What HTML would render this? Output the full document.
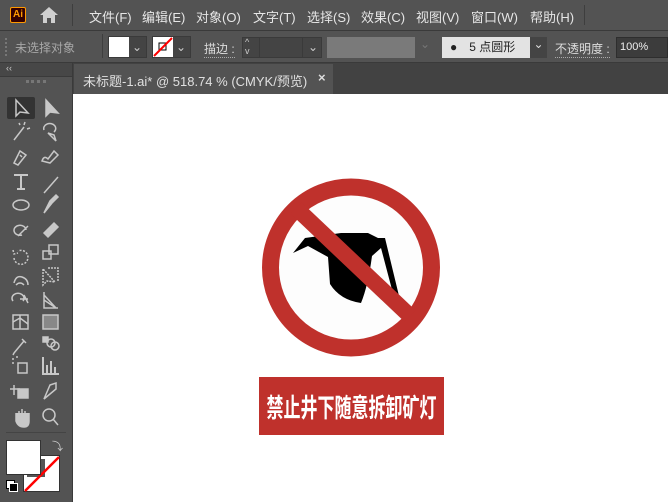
<!DOCTYPE html>
<html><head><meta charset="utf-8"><style>
*{margin:0;padding:0;box-sizing:border-box}
html,body{width:668px;height:502px;overflow:hidden}
body{background:#535353;font-family:"Liberation Sans","Noto Sans CJK SC",sans-serif;color:#ddd;position:relative}
.a{position:absolute}
.menu span{position:absolute;top:7px;font-size:13px;color:#e6e6e6}
.ctl{font-size:12px}
</style></head><body>
<div class="a" style="left:0;top:0;width:668px;height:30px;background:#535353"></div>
<div class="a" style="left:10px;top:7px;width:16px;height:16px;background:#330000;border:1px solid #ff9a00;border-radius:2px;color:#ff9a00;font-size:10px;font-weight:bold;text-align:center;line-height:14px">Ai</div>
<svg class="a" style="left:39px;top:6px" width="20" height="18"><path d="M10 1 L19 9 L16 9 L16 17 L12 17 L12 12 L8 12 L8 17 L4 17 L4 9 L1 9 Z" fill="#cfcfcf"/></svg>
<div class="a" style="left:72px;top:4px;width:1px;height:22px;background:#3e3e3e"></div>
<div class="menu">
<span style="left:89px">文件(F)</span><span style="left:142px">编辑(E)</span><span style="left:196px">对象(O)</span><span style="left:253px">文字(T)</span><span style="left:307px">选择(S)</span><span style="left:361px">效果(C)</span><span style="left:416px">视图(V)</span><span style="left:471px">窗口(W)</span><span style="left:530px">帮助(H)</span>
</div>
<div class="a" style="left:584px;top:5px;width:1px;height:20px;background:#3e3e3e"></div>
<div class="a" style="left:0;top:30px;width:668px;height:1px;background:#3a3a3a"></div>
<div class="a" style="left:5px;top:38px;width:2px;height:18px;border-left:2px dotted #777"></div>
<div class="a ctl" style="left:15px;top:39px;color:#a8a8a8">未选择对象</div>
<div class="a" style="left:102px;top:34px;width:1px;height:24px;background:#3e3e3e"></div>
<div class="a" style="left:108px;top:36px;width:39px;height:22px;background:#444;border:1px solid #3a3a3a"></div>
<div class="a" style="left:109px;top:37px;width:20px;height:20px;background:#fff"></div>
<div class="a" style="left:132px;top:40px;font-size:12px;color:#ccc">⌄</div>
<div class="a" style="left:152px;top:36px;width:39px;height:22px;background:#444;border:1px solid #3a3a3a"></div>
<svg class="a" style="left:153px;top:37px" width="20" height="20"><rect width="20" height="20" fill="#fff"/><rect x="6" y="6" width="7" height="7" fill="none" stroke="#000"/><line x1="1" y1="19" x2="19" y2="1" stroke="#f00" stroke-width="2"/></svg>
<div class="a" style="left:176px;top:40px;font-size:12px;color:#ccc">⌄</div>
<div class="a ctl" style="left:204px;top:40px;color:#ddd;border-bottom:1px dotted #aaa">描边 :</div>
<div class="a" style="left:242px;top:37px;width:80px;height:21px;background:#444;border:1px solid #3a3a3a"></div>
<div class="a" style="left:245px;top:38px;font-size:9px;color:#ccc;line-height:9px">^<br>v</div>
<div class="a" style="left:259px;top:37px;width:1px;height:21px;background:#3a3a3a"></div>
<div class="a" style="left:302px;top:37px;width:1px;height:21px;background:#3a3a3a"></div>
<div class="a" style="left:308px;top:40px;font-size:12px;color:#ccc">⌄</div>
<div class="a" style="left:327px;top:37px;width:88px;height:21px;background:#7a7a7a"></div>
<div class="a" style="left:415px;top:37px;width:20px;height:21px;background:#535353;color:#777;font-size:12px;text-align:center">⌄</div>
<div class="a" style="left:442px;top:37px;width:88px;height:21px;background:#e3e3e3;color:#222;font-size:12px;line-height:21px"><span style="margin-left:8px">●</span><span style="margin-left:12px">5 点圆形</span></div>
<div class="a" style="left:530px;top:37px;width:17px;height:21px;background:#444;color:#ddd;font-size:12px;text-align:center">⌄</div>
<div class="a ctl" style="left:555px;top:40px;color:#ddd;border-bottom:1px dotted #aaa">不透明度 :</div>
<div class="a" style="left:616px;top:37px;width:52px;height:21px;background:#3c3c3c;border:1px solid #2e2e2e;font-size:11px;color:#eee;line-height:19px;padding-left:3px">100%</div>
<div class="a" style="left:0;top:62px;width:668px;height:1px;background:#3a3a3a"></div>
<div class="a" style="left:73px;top:63px;width:595px;height:31px;background:#424242"></div>
<div class="a" style="left:74px;top:64px;width:259px;height:30px;background:#535353"></div>
<div class="a" style="left:83px;top:71px;font-size:13px;color:#e0e0e0">未标题-1.ai* @ 518.74 % (CMYK/预览)</div>
<div class="a" style="left:318px;top:70px;font-size:13px;color:#ddd;font-weight:bold">×</div>
<div class="a" style="left:0;top:63px;width:72px;height:439px;background:#535353"></div>
<div class="a" style="left:0;top:63px;width:72px;height:14px;background:#474747;border-bottom:1px solid #3a3a3a"></div>
<div class="a" style="left:6px;top:63px;font-size:9px;color:#ccc">‹‹</div>
<div class="a" style="left:26px;top:80px;width:20px;height:4px;border-top:3px dotted #777"></div>
<div class="a" style="left:72px;top:63px;width:1px;height:439px;background:#3a3a3a"></div>
<div class="a" style="left:7px;top:97px;width:28px;height:22px;background:#333;border-radius:2px"></div>
<svg class="a" style="left:0;top:95px" width="72" height="340" fill="none" stroke="#c8c8c8" stroke-width="1.5">
<path d="M16 5 L16 21 L20 17 L28 18 Z"/>
<path d="M46 5 L46 21 L50 17 L58 18 Z" fill="#c8c8c8"/>
<path d="M14 45 L24 32 M24 30 l1 -3 M27 34 l3 -1 M20 30 l-1 -2" />
<path d="M44 35 a6 5 0 1 1 10 2 M48 38 l8 8 l-2 -6 z"/>
<path d="M14 68 L20 56 L26 60 L18 70 Z M20 60 l2 2"/>
<path d="M42 66 q2 -6 6 -2 L54 56 L58 60 L50 68 Z"/>
<path d="M14 80 h14 M21 80 v14 M17 94 h8" stroke-width="2"/>
<path d="M44 98 L58 82"/>
<ellipse cx="21" cy="110" rx="8" ry="5"/>
<path d="M44 118 L52 108 L58 102 L56 100 L50 106 Z" fill="#c8c8c8"/>
<path d="M22 140 a6 5 0 1 1 4 -5 M18 141 l10 -10"/>
<path d="M44 138 L54 128 L58 132 L48 142 Z" fill="#c8c8c8"/>
<path d="M14 163 a7 7 0 1 0 4 -7 M13 155 l1 4 l4 -1" stroke-dasharray="2 1.5"/>
<rect x="43" y="156" width="8" height="8"/><rect x="49" y="150" width="9" height="9"/>
<path d="M14 188 q2 -8 8 -6 q6 2 6 8 M16 190 q4 -4 8 0"/>
<path d="M43 174 L43 190 L47 186 L55 187 Z M48 173 h10 v14" stroke-dasharray="2 1"/>
<path d="M13 206 a6 5 0 1 1 10 0 M20 204 h8 M24 200 l4 8"/>
<path d="M44 197 L44 213 L58 213 M44 205 l12 8 M44 200 l12 13"/>
<rect x="13" y="220" width="15" height="14"/><path d="M13 227 l7 -4 l8 6 M20 220 v14"/>
<rect x="43" y="220" width="15" height="14" fill="#888"/>
<path d="M14 258 L24 246 M22 244 l4 4 M14 258 l-1 2"/>
<circle cx="51" cy="248" r="4"/><circle cx="55" cy="251" r="4"/><rect x="43" y="242" width="5" height="5" fill="#c8c8c8"/>
<rect x="18" y="268" width="9" height="10"/><path d="M12 264 h2 M12 268 h2 M16 262 h2"/>
<path d="M43 262 v17 h16 M47 278 v-8 M51 278 v-12 M55 278 v-6" stroke-width="2"/>
<path d="M14 290 v10 M10 294 h10"/><rect x="18" y="294" width="10" height="9" fill="#c8c8c8"/>
<path d="M44 304 L50 290 L56 288 L56 294 Z"/>
<path d="M16 318 v8 q2 6 8 6 q5 0 5 -6 v-8 M19 316 v8 M22 314 v8 M25 316 v8" fill="#c8c8c8"/>
<circle cx="49" cy="320" r="6"/><path d="M53 324 L58 330"/>
</svg>
<div class="a" style="left:6px;top:432px;width:60px;height:1px;background:#444"></div>
<div class="a" style="left:23px;top:455px;width:37px;height:37px;background:#fff;border:1px solid #333"></div>
<svg class="a" style="left:24px;top:456px" width="36" height="36"><rect x="6" y="6" width="12" height="12" fill="none" stroke="#555" stroke-width="6"/><line x1="1" y1="35" x2="35" y2="1" stroke="#f00" stroke-width="2.5"/></svg>
<div class="a" style="left:6px;top:440px;width:35px;height:35px;background:#fff;border:1px solid #333"></div>
<div class="a" style="left:52px;top:438px;font-size:11px;color:#ccc">⤵</div>
<div class="a" style="left:6px;top:480px;width:9px;height:9px;background:#fff;border:1px solid #000"></div>
<div class="a" style="left:9px;top:483px;width:9px;height:9px;background:#000;border:1px solid #fff"></div>
<div class="a" style="left:73px;top:94px;width:595px;height:408px;background:#fff"></div>
<svg class="a" style="left:260px;top:176px" width="184" height="184">
<circle cx="91" cy="91.5" r="80.5" fill="#fdfdfd" stroke="#bf312c" stroke-width="17"/>
<path d="M33 77 L45 62 L81 57 L108 57 L118 62 L125 62 L140 124 L135 125 L121 72 L112 80 Q108 110 101 127 Q80 124 70 108 L68 81 L48 70 Z" fill="#000"/>
<line x1="36" y1="32" x2="150" y2="140" stroke="#bf312c" stroke-width="16"/>
</svg>
<div class="a" style="left:259px;top:377px;width:185px;height:58px;background:#bf312c;overflow:hidden;text-align:center">
<span style="display:inline-block;color:#fff;font-size:17px;font-weight:bold;line-height:58px;font-family:'Noto Sans CJK SC',sans-serif;transform:scaleY(1.55);white-space:nowrap">禁止井下随意拆卸矿灯</span></div>
</body></html>
